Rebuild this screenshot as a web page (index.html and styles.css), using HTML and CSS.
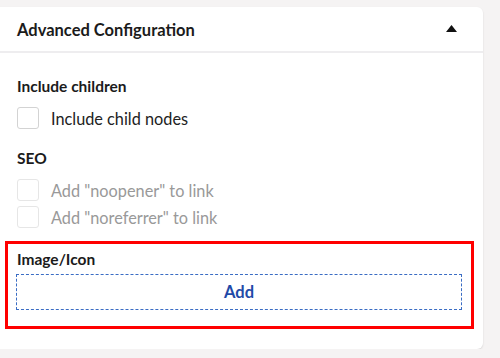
FILE: index.html
```html
<!DOCTYPE html>
<html lang="en">
<head>
  <meta charset="UTF-8" />
  <meta name="viewport" content="width=device-width, initial-scale=1" />
  <title>Advanced Configuration</title>
  <link rel="stylesheet" href="styles.css">
</head>
<body>

  <div class="panel">
    <div class="panel-header">
      <h2>Advanced Configuration</h2>
      <svg class="caret" width="11" height="7" viewBox="0 0 11 7"><path d="M5.5 0 L11 7 L0 7 Z" fill="#111"/></svg>
    </div>

    <div class="panel-body">
      <div class="field">
        <div class="field-label">Include children</div>
        <label class="check">
          <span class="box"></span>
          <span>Include child nodes</span>
        </label>
      </div>

      <div class="field seo">
        <div class="field-label">SEO</div>
        <label class="check disabled">
          <span class="box"></span>
          <span>Add "noopener" to link</span>
        </label>
        <label class="check disabled">
          <span class="box"></span>
          <span>Add "noreferrer" to link</span>
        </label>
      </div>

      <div class="field highlight">
        <div class="field-label">Image/Icon</div>
        <button class="add-btn">Add</button>
      </div>
    </div>
  </div>

</body>
</html>
```

FILE: styles.css
```css
body {
  margin: 0;
  background: #f5f3f3;
  font-family: Lato, "Open Sans", sans-serif;
  color: #1b1b1b;
}

.panel {
  margin: 7px 0 0 -10px;
  width: 493px;
  background: white;
  border-radius: 0 6px 6px 0;
  box-shadow: 0 1px 2px rgba(0,0,0,0.12);
  padding-bottom: 20px;
}

.panel-header {
  height: 44px;
  display: flex;
  align-items: center;
  justify-content: space-between;
  padding: 0 26px 0 27px;
  border-bottom: 2px solid #eeedef;
}

.panel-header h2 {
  margin: 0;
  font-size: 16.5px;
  font-weight: 700;
  position: relative;
  top: 1px;
}

.caret {
  margin-top: -2px;
}

.panel-body {
  padding: 23px 17px 0 27px;
}

.field {
  display: flex;
  flex-direction: column;
  margin-bottom: 14px;
}

.field.seo {
  margin-bottom: 8px;
}

.field-label {
  font-size: 15.5px;
  font-weight: 700;
  line-height: 20px;
  margin-bottom: 11px;
}

.check {
  display: flex;
  align-items: center;
  gap: 12px;
  height: 22px;
  font-size: 16.3px;
  color: #222;
  margin-bottom: 5px;
}

.box {
  width: 20px;
  height: 20px;
  border: 1px solid #d3d3d3;
  border-radius: 3px;
}

.check.disabled {
  color: #999;
}

.check.disabled .box {
  border-color: #e6e6e6;
}

.highlight {
  margin: 0 -8px 0 -12px;
  border: 3px solid #f00;
  padding: 5px 9px 16px 8px;
}

.highlight .field-label {
  padding-left: 1px;
  margin-bottom: 5px;
}

.add-btn {
  height: 36px;
  border: 1px dashed #3a6cc4;
  background: white;
  color: #1f4aa8;
  font-family: Lato, sans-serif;
  font-size: 16.5px;
  font-weight: 700;
}
```
